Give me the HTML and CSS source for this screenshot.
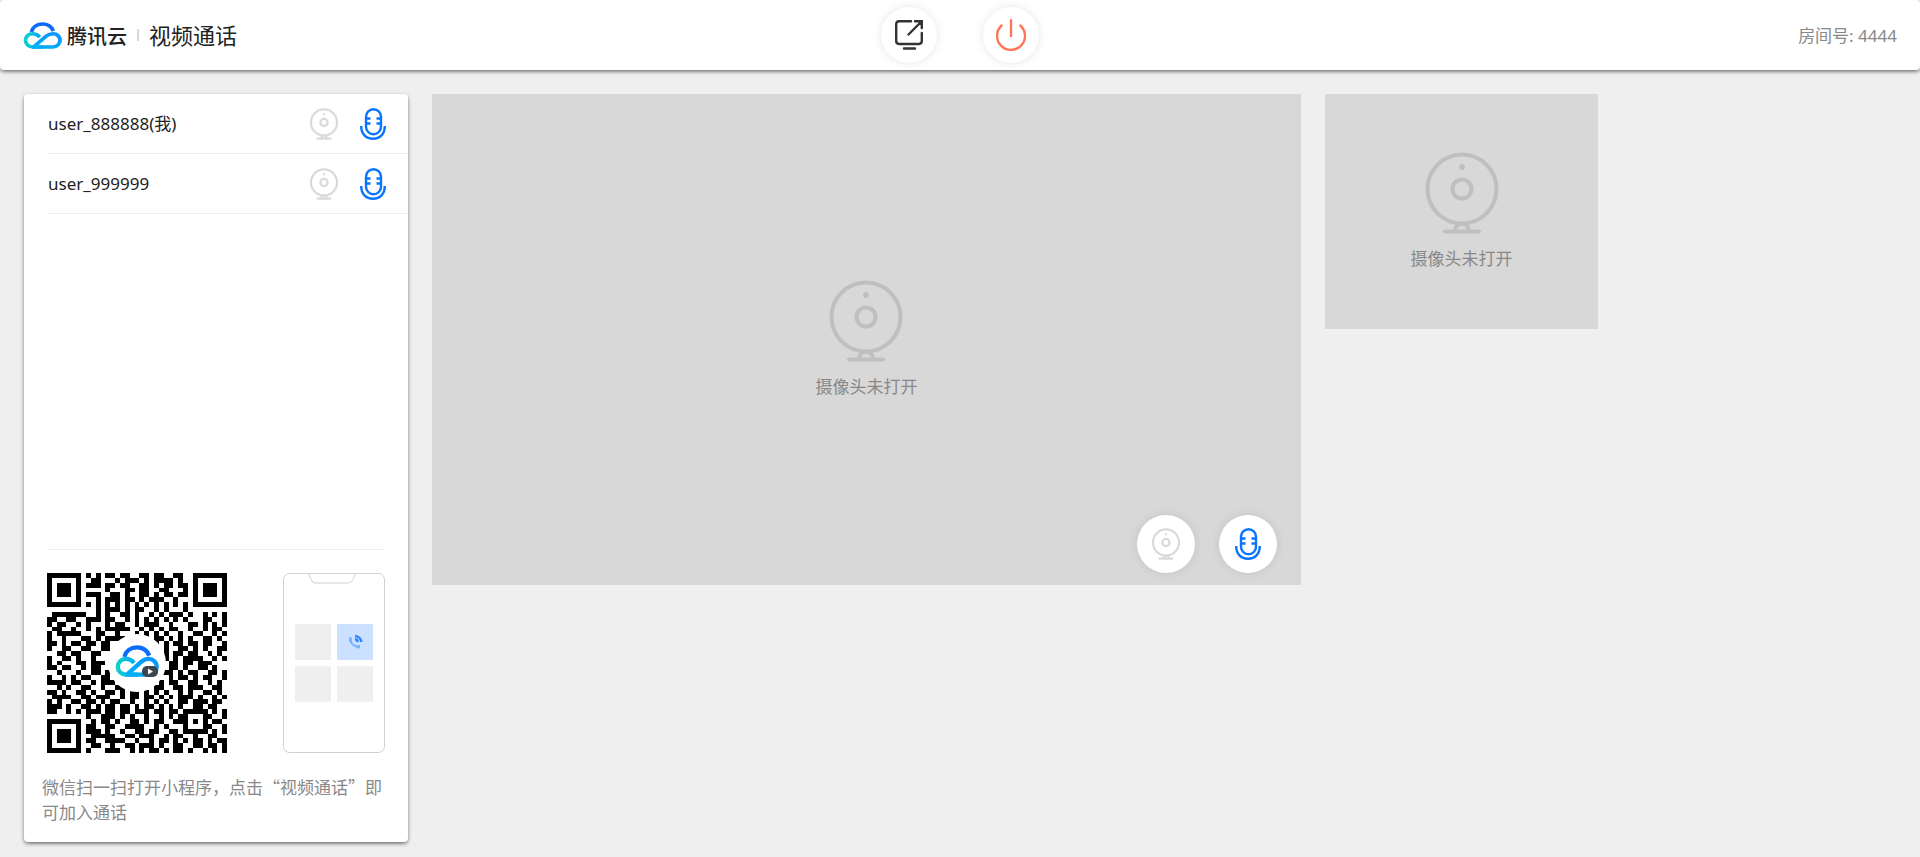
FILE: index.html
```html
<!DOCTYPE html>
<html lang="zh-CN">
  <head>
    <meta charset="UTF-8" />
    <meta name="viewport" content="width=device-width, initial-scale=1.0" />
    <title>腾讯云 | 视频通话</title>
    <link rel="stylesheet" href="styles.css">
  </head>
  <body>
    <svg class="sprite" aria-hidden="true">
      <defs>
        <linearGradient id="cloudLeft" x1="0" y1="0" x2="1" y2="0">
          <stop offset="0" stop-color="#0fd0cb" />
          <stop offset="1" stop-color="#00a1ff" />
        </linearGradient>
        <linearGradient id="cloudRight" x1="0" y1="1" x2="1" y2="0">
          <stop offset="0" stop-color="#00b4f5" />
          <stop offset="1" stop-color="#0a92ff" />
        </linearGradient>
      </defs>
      <symbol id="cloud" viewBox="1 0 37 27" preserveAspectRatio="none">
        <g fill="none" stroke-width="3.600">
          <path stroke="#0a6cff" d="M9 10C10 5 14.300 2 19.500 2C24 2 28 4.500 29.800 9" />
          <path stroke="url(#cloudLeft)" d="M17 15C15 12.700 12.700 11.700 10 11.700A6.600 6.600 0 0 0 10 25H20" />
          <path stroke="url(#cloudRight)" d="M11 25L23 14.200C25 12.500 27 11.700 29.500 11.700A6.600 6.600 0 0 1 29.500 25H10" />
        </g>
      </symbol>
      <symbol id="camera" viewBox="0 0 74 82">
        <g fill="none" stroke="currentColor">
          <circle cx="37" cy="37" r="34.500" />
          <circle cx="37" cy="37" r="9.500" />
          <path d="M30 79C30.500 75 32 73 34 72H40C42 73 43.500 75 44 79" />
          <path stroke-linecap="round" d="M20 79.500H54" />
        </g>
        <circle cx="37" cy="15" r="3" fill="currentColor" />
      </symbol>
      <symbol id="mic" viewBox="0 0 26 32">
        <g fill="none" stroke="currentColor" stroke-width="2.400">
          <rect x="6" y="1.200" width="15" height="25" rx="7.500" />
          <path d="M6 10.500H10.500M6 15.500H10.500M16.500 10.500H21M16.500 15.500H21" />
          <path d="M1.200 18C1.200 26 6 30.800 13 30.800C20 30.800 24.800 26 24.800 18" />
        </g>
      </symbol>
    </svg>

    <header class="header">
      <div class="brand">
        <svg class="brand-logo" aria-hidden="true"><use href="#cloud" /></svg>
        <span class="brand-name">腾讯云</span>
        <span class="brand-line"></span>
        <h1 class="brand-title">视频通话</h1>
      </div>
      <div class="actions">
        <button class="round-btn" type="button" aria-label="共享屏幕">
          <svg class="share-icon" viewBox="0 0 28 30" aria-hidden="true">
            <path d="M16 1.200H4A3 3 0 0 0 1.200 4V21A3 3 0 0 0 4 24H24A3 3 0 0 0 26.800 21V13M13.500 14.500L26 2M20 1.200H26.800V8M9 28.500H20" />
          </svg>
        </button>
        <button class="round-btn" type="button" aria-label="退出房间">
          <svg class="power-icon" viewBox="0 0 30 32" aria-hidden="true">
            <path d="M15 1.200V17M5.600 6.500A14 14 0 1 0 24.400 6.500" />
          </svg>
        </button>
      </div>
      <div class="room">房间号: 4444</div>
    </header>

    <main class="content">
      <aside class="sidebar">
        <ul class="member-list">
          <li class="member">
            <span class="member-name">user_888888(我)</span>
            <svg class="icon-camera" aria-hidden="true"><use href="#camera" /></svg>
            <svg class="icon-mic" aria-hidden="true"><use href="#mic" /></svg>
          </li>
          <li class="member">
            <span class="member-name">user_999999</span>
            <svg class="icon-camera" aria-hidden="true"><use href="#camera" /></svg>
            <svg class="icon-mic" aria-hidden="true"><use href="#mic" /></svg>
          </li>
        </ul>
        <div class="join">
          <svg class="qr" viewBox="0 0 180 180" role="img" aria-label="小程序二维码">
            <path id="qrModules" transform="scale(4.865)" shape-rendering="crispEdges" />
            <circle cx="90" cy="90" r="29" fill="#fff" />
            <use href="#cloud" x="68" y="72" width="44" height="32" />
            <rect x="95" y="93" width="16" height="11" rx="5" fill="#3d4650" />
            <path d="M101 95.500L106 98.500L101 101.500Z" fill="#fff" />
          </svg>
          <svg class="phone" viewBox="0 0 102 180" aria-hidden="true">
            <rect x="0.500" y="0.500" width="101" height="179" rx="6" fill="#fff" stroke="#d0d0d0" />
            <path d="M25 0.500C27 3 28 8 31 10H66C70 9 71 3 73 0.500" fill="none" stroke="#d0d0d0" />
            <path d="M12 51H48V87H12ZM12 93H48V129H12ZM54 93H90V129H54Z" fill="#efefef" />
            <path d="M54 51H90V87H54Z" fill="#cce0ff" />
            <path d="M67 65C67 70 71 74 76 74" fill="none" stroke="#7db3ff" stroke-width="2" />
            <path d="M66 64L69 65V69L66 69ZM73 72L77 72V75.500L73 75Z" fill="#7db3ff" />
            <path d="M72 66A4 4 0 0 1 75 69M72 63A7 7 0 0 1 78.500 69" fill="none" stroke="#2f86ff" stroke-width="2.500" />
          </svg>
        </div>
        <p class="tip">微信扫一扫打开小程序，点击“视频通话”即可加入通话</p>
      </aside>

      <section class="video video-main">
        <div class="video-off">
          <svg class="off-icon" aria-hidden="true"><use href="#camera" /></svg>
          <span>摄像头未打开</span>
        </div>
        <div class="controls">
          <button class="round-btn control-btn" type="button" aria-label="摄像头">
            <svg class="icon-camera" aria-hidden="true"><use href="#camera" /></svg>
          </button>
          <button class="round-btn control-btn" type="button" aria-label="麦克风">
            <svg class="icon-mic" aria-hidden="true"><use href="#mic" /></svg>
          </button>
        </div>
      </section>

      <section class="video video-side">
        <div class="video-off">
          <svg class="off-icon" aria-hidden="true"><use href="#camera" /></svg>
          <span>摄像头未打开</span>
        </div>
      </section>
    </main>

    <script src="qr.js"></script>
  </body>
</html>
```
FILE: styles.css
```css
* {
  box-sizing: border-box;
}
body {
  margin: 0;
  min-height: 100vh;
  display: flex;
  flex-direction: column;
  background-color: #efefef;
  color: #222;
  font-family: "Noto Sans", "Noto Sans CJK SC", sans-serif;
  font-size: 17px;
  line-height: 25px;
}
.sprite {
  position: absolute;
  width: 0;
  height: 0;
}
.header {
  display: grid;
  grid-template-columns: 1fr auto 1fr;
  align-items: center;
  height: 70px;
  padding: 0 23px;
  background-color: #fff;
  border-radius: 4px;
  box-shadow: 0 2px 4px -1px rgba(0, 0, 0, 0.6), 0 1px 4px rgba(0, 0, 0, 0.14);
}
.brand {
  display: flex;
  align-items: center;
}
.brand-logo {
  width: 39px;
  height: 27px;
}
.brand-name {
  margin-left: 5px;
  font-family: "Noto Sans CJK SC", sans-serif;
  font-size: 20px;
  font-weight: 500;
}
.brand-line {
  width: 2px;
  height: 12px;
  margin: 0 10px;
  background-color: #d8d8d8;
}
.brand-title {
  margin: 0;
  font-size: 22px;
  font-weight: 400;
}
.actions {
  display: flex;
  gap: 46px;
}
.round-btn {
  display: flex;
  align-items: center;
  justify-content: center;
  width: 56px;
  height: 56px;
  padding: 0;
  border: none;
  border-radius: 50%;
  background-color: #fff;
  box-shadow: 0 0 10px rgba(0, 0, 0, 0.1);
  cursor: pointer;
}
.share-icon,
.power-icon {
  fill: none;
  stroke-width: 2.4;
  stroke-linecap: round;
}
.share-icon {
  width: 28px;
  height: 30px;
  stroke: #333;
}
.power-icon {
  width: 30px;
  height: 32px;
  stroke: #ff7558;
}
.room {
  justify-self: end;
  color: #888;
}
.content {
  flex: 1;
  display: grid;
  grid-template-columns: 20vw 45.25vw 14.25vw;
  gap: 24px;
  padding: 24px 24px 15px;
}
.sidebar {
  display: flex;
  flex-direction: column;
  background-color: #fff;
  border-radius: 4px;
  box-shadow: 0 2px 4px -1px rgba(0, 0, 0, 0.6), 0 1px 4px rgba(0, 0, 0, 0.14);
}
.member-list {
  flex: 1;
  margin: 0;
  padding: 0 0 0 24px;
  list-style: none;
}
.member {
  display: flex;
  align-items: center;
  gap: 22px;
  height: 60px;
  padding-right: 22px;
  border-bottom: 1px solid #efefef;
}
.member-name {
  flex: 1;
}
.icon-camera {
  width: 28px;
  height: 32px;
  color: #dadada;
  stroke-width: 6;
}
.icon-mic {
  width: 26px;
  height: 32px;
  color: #0a74ff;
}
.join {
  display: flex;
  justify-content: space-between;
  margin: 0 23px;
  padding-top: 23px;
  border-top: 1px solid #efefef;
}
.qr {
  width: 180px;
  height: 180px;
}
.phone {
  width: 102px;
  height: 180px;
}
.tip {
  margin: 0;
  padding: 21px 18px 18px;
  color: #888;
  font-family: "Noto Sans CJK SC", sans-serif;
}
.video {
  position: relative;
  display: flex;
  align-items: center;
  justify-content: center;
  align-self: start;
  background-color: #d8d8d8;
}
.video-main {
  aspect-ratio: 869 / 491;
}
.video-side {
  aspect-ratio: 7 / 6;
}
.video-off {
  display: flex;
  flex-direction: column;
  align-items: center;
  gap: 12px;
  color: #888;
}
.off-icon {
  width: 74px;
  height: 82px;
  color: #bfbfbf;
  stroke-width: 4;
}
.controls {
  position: absolute;
  right: 24px;
  bottom: 12px;
  display: flex;
  gap: 24px;
}
.control-btn {
  width: 58px;
  height: 58px;
}
```
FILE: qr.js
```js
const rows = [
  "#######.#.#.##.##..##.##..##..#######",
  "#.....#..##...#.###.#.####.#..#.....#",
  "#.###.#.###.##.##..##.#.##.##.#.###.#",
  "#.###.#.....#...##.##..##...#.#.###.#",
  "#.###.#.###..##.#..##.#.##.##.#.###.#",
  "#.....#...#.###.##.#.###..#...#.....#",
  "#######.#.#.#.#.#.#.#.#.#.#.#.#######",
  "..........#.###.#.##..#.#...#........",
  ".#######..#.#..##.#..#.#.###.#..#.#.#",
  "##..##..###.##..#.#.#.#.#.#.#...##..#",
  "#.##..#.#...#.##..#.###..#...##.#.#.#",
  ".##..#..#.#.#####..#.#.#.##..#..#.##.",
  "#.#####...##..#...#.#.#.#..#..##..#.#",
  "#..#...##.#.####....#.##.#.#.#..##.#.",
  "##.#.##.##.##.......###.#.##.##.##..#",
  "#..##..##..##........##.#..##.#.#..##",
  "..##.##..##...........#.#.##.##..#.#.",
  "#..##.#..#.............##.#.####..#.#",
  "#.#...##.###...........#.##.##.###...",
  "##.##..#.##............#.##.#..##.#..",
  "..#...#..##.#..........###.#.##..##.#",
  "#..#.#.##..##.........#..#.##.#.##..#",
  "####.##..#.###.......#.#.##..##..#.#.",
  "..#.#..##..#..##...#..##..##.###..##.",
  "##.#..##.#..##.#.##.#.#.#..#.#..##.#.",
  ".####..##.###..#.##.##.#.#.###.#..#.#",
  "#.#..##.##.#.##..#..#.#.#..##.###.##.",
  "###.#..##.#.##.##.#.##.#.#.#..##.##..",
  "##..#.#.###.##.##.###.##.##.#####.#.#",
  "........#..###.#.#..#..#.#.##...##..#",
  "#######..#.##.#..##.#.##..###.#.#.##.",
  "#.....#.##..##..####..#.#...#...##..#",
  "#.###.#.###.#..#..##.##..##.#####.#.#",
  "#.###.#..#####..##.###..#.##..#..##..",
  "#.###.#.##..####..#..#.##.#.#.##.#.##",
  "#.....#..##..#..##.###.#..##..##.##.#",
  "#######.#...###..#.#.##.#.##.#..#.#.#",
];

let d = "";
rows.forEach((row, y) => {
  for (const run of row.matchAll(/#+/g)) {
    d += `M${run.index} ${y}h${run[0].length}v1h-${run[0].length}z`;
  }
});
document.getElementById("qrModules").setAttribute("d", d);
```
